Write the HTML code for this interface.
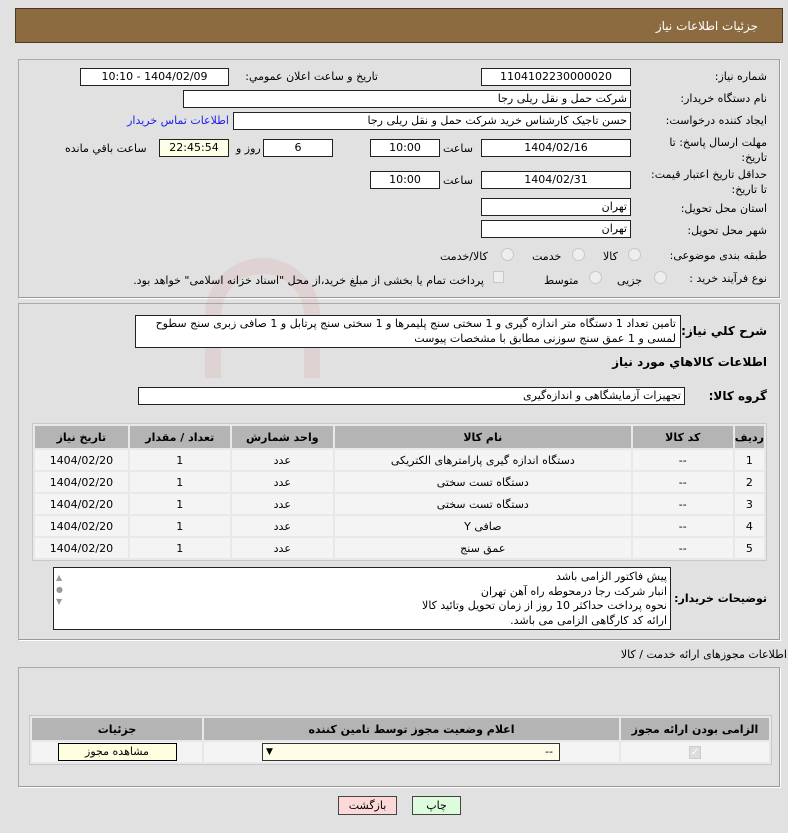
<!DOCTYPE html>
<html><head><meta charset="utf-8">
<style>
*{box-sizing:border-box;margin:0;padding:0}
body{width:788px;height:833px;background:#e1e1e1;font-family:"DejaVu Sans","Liberation Sans",sans-serif;font-size:11px;color:#000;position:relative;overflow:hidden}
.a{position:absolute;white-space:nowrap}
.r{text-align:right;direction:rtl}
.box{position:absolute;background:#fff;border:1px solid #222;height:18px;line-height:16px;direction:rtl;white-space:nowrap;overflow:hidden}
.c{text-align:center}
.pr{padding-right:3px}
.panel{position:absolute;border:1px solid #aaa;border-right-color:#fff;border-bottom-color:#fff;box-shadow:inset -1px -1px 0 #999}
.rad{position:absolute;width:13px;height:13px;border-radius:50%;border:1px solid #c8c8c8;background:#eee}
table{border-collapse:separate;border-spacing:2px;position:absolute;direction:rtl;background:#e8e8e8;border:1px solid #c8c8c8}
th{background:#b4b4b4;font-weight:bold;height:22px;font-size:11px}
td{background:#f4f4f4;height:20px;text-align:center}
.b{font-weight:bold}
</style></head><body>
<div class="a" style="left:15px;top:8px;width:768px;height:35px;background:#8c6b40;border:1px solid #4a3a20"></div>
<div class="a r" style="right:30px;top:19px;color:#fff;font-size:12px">جزئیات اطلاعات نیاز</div>

<div class="panel" style="left:18px;top:59px;width:763px;height:240px"></div>
<div class="panel" style="left:18px;top:303px;width:763px;height:338px"></div>

<!-- watermark -->
<div class="a" style="left:205px;top:258px;width:115px;height:120px;border:16px solid rgba(210,120,120,.13);border-bottom:none;border-radius:58px 58px 0 0"></div>

<div class="a r" style="right:21px;top:70px">شماره نیاز:</div>
<div class="box c" style="left:481px;top:68px;width:150px">1104102230000020</div>
<div class="a r" style="left:233px;width:145px;top:70px">تاریخ و ساعت اعلان عمومي:</div>
<div class="box c" style="left:80px;top:68px;width:149px">1404/02/09 - 10:10</div>

<div class="a r" style="right:21px;top:92px">نام دستگاه خریدار:</div>
<div class="box pr" style="left:183px;top:90px;width:448px">شرکت حمل و نقل ریلی رجا</div>

<div class="a r" style="right:21px;top:114px">ایجاد کننده درخواست:</div>
<div class="box pr" style="left:233px;top:112px;width:398px">حسن تاجیک کارشناس خرید شرکت حمل و نقل ریلی رجا</div>
<div class="a r" style="left:123px;width:106px;top:114px;color:#2020ee">اطلاعات تماس خریدار</div>

<div class="a r" style="right:21px;top:135px;line-height:15px">مهلت ارسال پاسخ: تا<br>تاریخ:</div>
<div class="box c" style="left:481px;top:139px;width:150px">1404/02/16</div>
<div class="a r" style="left:443px;top:142px">ساعت</div>
<div class="box c" style="left:370px;top:139px;width:70px">10:00</div>
<div class="box c" style="left:263px;top:139px;width:70px">6</div>
<div class="a r" style="left:236px;top:142px">روز و</div>
<div class="box c" style="left:159px;top:139px;width:70px;background:#ffffe8">22:45:54</div>
<div class="a r" style="left:65px;top:142px">ساعت باقي مانده</div>

<div class="a r" style="right:21px;top:167px;line-height:15px">حداقل تاریخ اعتبار قیمت:<br>تا تاریخ:</div>
<div class="box c" style="left:481px;top:171px;width:150px">1404/02/31</div>
<div class="a r" style="left:443px;top:174px">ساعت</div>
<div class="box c" style="left:370px;top:171px;width:70px">10:00</div>

<div class="a r" style="right:21px;top:202px">استان محل تحویل:</div>
<div class="box pr" style="left:481px;top:198px;width:150px">تهران</div>
<div class="a r" style="right:21px;top:224px">شهر محل تحویل:</div>
<div class="box pr" style="left:481px;top:220px;width:150px">تهران</div>

<div class="a r" style="right:21px;top:249px">طبقه بندی موضوعی:</div>
<div class="rad" style="left:628px;top:248px"></div>
<div class="a r" style="left:603px;top:250px">کالا</div>
<div class="rad" style="left:572px;top:248px"></div>
<div class="a r" style="left:532px;top:250px">خدمت</div>
<div class="rad" style="left:501px;top:248px"></div>
<div class="a r" style="left:440px;top:250px">کالا/خدمت</div>

<div class="a r" style="right:21px;top:272px">نوع فرآیند خرید :</div>
<div class="rad" style="left:654px;top:271px"></div>
<div class="a r" style="left:617px;top:274px">جزیی</div>
<div class="rad" style="left:589px;top:271px"></div>
<div class="a r" style="left:544px;top:274px">متوسط</div>
<div class="a" style="left:493px;top:271px;width:11px;height:12px;border:1px solid #c8c8c8;background:#eee"></div>
<div class="a r" style="left:101px;width:383px;top:274px">پرداخت تمام یا بخشی از مبلغ خرید،از محل "اسناد خزانه اسلامی" خواهد بود.</div>

<div class="a r b" style="right:21px;top:324px;font-size:12px">شرح کلي نیاز:</div>
<div class="box" style="left:135px;top:315px;width:546px;height:33px;line-height:15px;white-space:normal;padding-right:4px">تامین تعداد 1 دستگاه متر اندازه گیری و 1 سختی سنج پلیمرها و 1 سختی سنج پرتابل و 1 صافی زبری سنج سطوح لمسی و 1 عمق سنج سوزنی مطابق با مشخصات پیوست</div>
<div class="a r b" style="right:21px;top:355px;font-size:12px">اطلاعات کالاهاي مورد نیاز</div>
<div class="a r b" style="right:21px;top:389px;font-size:12px">گروه کالا:</div>
<div class="box pr" style="left:138px;top:387px;width:547px">تجهیزات آزمایشگاهی و اندازه‌گیری</div>

<table style="left:32px;top:423px;width:735px">
<tr><th style="width:26px">ردیف</th><th style="width:100px">کد کالا</th><th style="width:296px">نام کالا</th><th style="width:101px">واحد شمارش</th><th style="width:100px">تعداد / مقدار</th><th>تاریخ نیاز</th></tr>
<tr><td>1</td><td>--</td><td>دستگاه اندازه گیری پارامترهای الکتریکی</td><td>عدد</td><td>1</td><td>1404/02/20</td></tr>
<tr><td>2</td><td>--</td><td>دستگاه تست سختی</td><td>عدد</td><td>1</td><td>1404/02/20</td></tr>
<tr><td>3</td><td>--</td><td>دستگاه تست سختی</td><td>عدد</td><td>1</td><td>1404/02/20</td></tr>
<tr><td>4</td><td>--</td><td>صافی Y</td><td>عدد</td><td>1</td><td>1404/02/20</td></tr>
<tr><td>5</td><td>--</td><td>عمق سنج</td><td>عدد</td><td>1</td><td>1404/02/20</td></tr>
</table>

<div class="a r b" style="right:21px;top:592px;font-size:11px">توضیحات خریدار:</div>
<div class="box" style="left:53px;top:567px;width:618px;height:63px;line-height:14.5px;white-space:normal;padding-right:3px;padding-top:2px">پیش فاکتور الزامی باشد<br>انبار شرکت رجا درمحوطه راه آهن تهران<br>نحوه پرداخت حداکثر 10 روز از زمان تحویل وتائید کالا<br>ارائه کد کارگاهی الزامی می باشد.</div>
<div class="a" style="left:56px;top:572px;color:#999;font-size:8px;line-height:12px">▲<br>●<br>▼</div>

<div class="a r" style="right:1px;top:648px">اطلاعات مجوزهای ارائه خدمت / کالا</div>
<div class="panel" style="left:18px;top:667px;width:763px;height:121px"></div>
<table style="left:29px;top:715px;width:743px">
<tr><th style="width:148px">الزامی بودن ارائه مجوز</th><th style="width:415px">اعلام وضعیت مجوز توسط تامین کننده</th><th>جزئیات</th></tr>
<tr><td><span style="display:inline-block;width:12px;height:13px;background:#ddd;border:1px solid #ccc;color:#fff;font-size:10px;line-height:12px">✓</span></td><td><div style="margin:0 auto 0 58px;width:298px;height:18px;border:1px solid #333;background:#fdfde8;text-align:right;padding-right:6px;line-height:16px;position:relative">--<span style="position:absolute;left:3px;top:0;font-size:9px">▼</span></div></td><td><div style="margin:0 auto;width:119px;height:18px;border:1px solid #000;background:#ffffe0;line-height:16px">مشاهده مجوز</div></td></tr>
</table>

<div class="a c" style="left:338px;top:796px;width:59px;height:19px;border:1px solid #444;background:#fdd8d8;line-height:17px">بازگشت</div>
<div class="a c" style="left:412px;top:796px;width:49px;height:19px;border:1px solid #444;background:#dcfcdc;line-height:17px">چاپ</div>
</body></html>
